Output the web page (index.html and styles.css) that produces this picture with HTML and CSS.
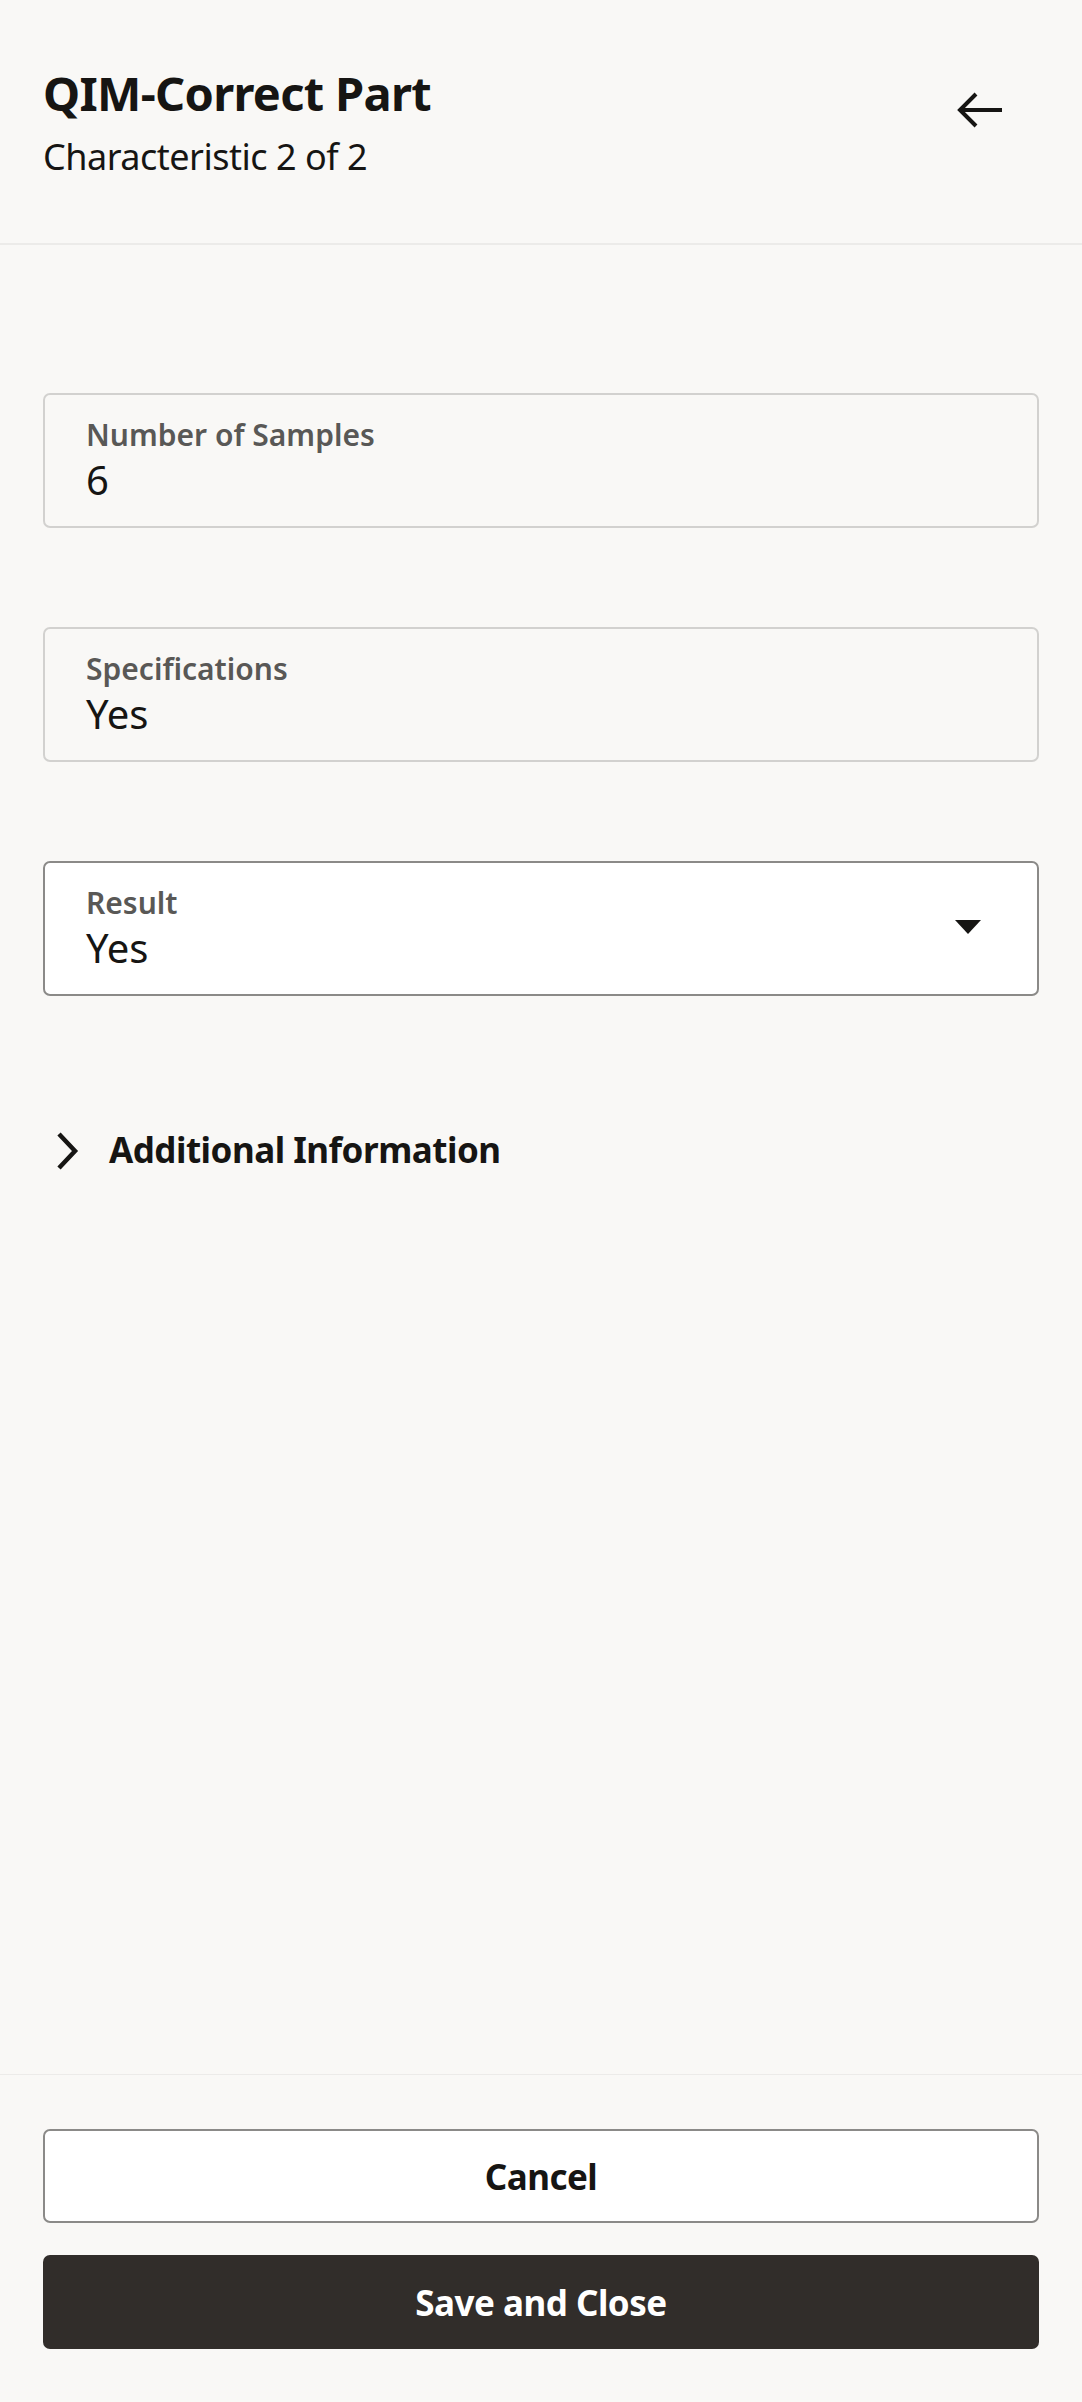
FILE: index.html
```html
<!DOCTYPE html>
<html lang="en">
<head>
<meta charset="utf-8">
<title>QIM-Correct Part</title>
<link rel="stylesheet" href="styles.css">
</head>
<body>
<div class="page">
  <header class="header">
    <div class="titles">
      <h1 class="title">QIM-Correct Part</h1>
      <div class="subtitle">Characteristic 2 of 2</div>
    </div>
    <button class="back" aria-label="Back">
      <svg width="48" height="48" viewBox="0 0 48 48" fill="none">
        <path d="M45 24H3M19 8L3 24L19 40" stroke="#161513" stroke-width="4" stroke-linecap="butt" stroke-linejoin="miter"/>
      </svg>
    </button>
  </header>

  <main class="main">
    <div class="field readonly">
      <div class="label">Number of Samples</div>
      <div class="value">6</div>
    </div>
    <div class="field readonly">
      <div class="label">Specifications</div>
      <div class="value">Yes</div>
    </div>
    <div class="field select">
      <div class="field-text">
        <div class="label">Result</div>
        <div class="value">Yes</div>
      </div>
      <svg class="caret" width="26" height="14" viewBox="0 0 26 14"><path d="M0 0H26L13 14Z" fill="#161513"/></svg>
    </div>

    <div class="disclosure">
      <svg class="chevron" width="24" height="38" viewBox="0 0 24 38" fill="none">
        <path d="M4 2L20 19L4 36" stroke="#161513" stroke-width="4.5"/>
      </svg>
      <span class="disclosure-text">Additional Information</span>
    </div>
  </main>

  <footer class="footer">
    <button class="btn btn-outline">Cancel</button>
    <button class="btn btn-solid">Save and Close</button>
  </footer>
</div>
</body>
</html>
```

FILE: styles.css
```css
* { box-sizing: border-box; }

html, body {
  margin: 0;
  padding: 0;
  background: #f9f8f6;
}

body {
  font-family: "Noto Sans", "Open Sans", sans-serif;
  color: #161513;
}

.page {
  min-height: 2402px;
  display: flex;
  flex-direction: column;
}

.header {
  display: flex;
  justify-content: space-between;
  align-items: flex-start;
  padding: 65px 77px 64px 43px;
  border-bottom: 2px solid #ecebe9;
}

.title {
  margin: 0;
  font-size: 47px;
  line-height: 56px;
  font-weight: 700;
  letter-spacing: -0.7px;
}

.subtitle {
  margin-top: 14px;
  font-size: 36px;
  line-height: 44px;
  font-weight: 400;
  letter-spacing: -0.5px;
}

.back {
  margin-top: 21px;
  width: 48px;
  height: 48px;
  padding: 0;
  border: 0;
  background: none;
  display: flex;
}

.main {
  flex: 1;
  display: flex;
  flex-direction: column;
  padding: 148px 43px 0;
}

.field {
  border: 2px solid #d2d1cf;
  border-radius: 7px;
  padding: 22px 27px 19px 41px;
  margin-bottom: 99px;
}

.field.select {
  background: #ffffff;
  border-color: #8b8a88;
  display: flex;
  align-items: center;
  justify-content: space-between;
  padding-right: 56px;
}

.label {
  font-size: 30px;
  line-height: 36px;
  font-weight: 600;
  color: #595856;
}

.value {
  font-size: 40px;
  line-height: 54px;
  font-weight: 400;
  color: #161513;
}

.caret {
  display: block;
  margin-top: -6px;
}

.disclosure {
  display: flex;
  align-items: center;
  gap: 30px;
  margin-top: 33px;
  padding-left: 12px;
}

.chevron { display: block; margin-top: 2px; }

.disclosure-text {
  font-size: 35px;
  line-height: 44px;
  font-weight: 700;
  letter-spacing: -0.5px;
}

.footer {
  border-top: 1px solid #ecebe9;
  padding: 54px 43px 53px;
  display: flex;
  flex-direction: column;
  gap: 32px;
}

.btn {
  height: 94px;
  border-radius: 7px;
  font-family: "Noto Sans", "Open Sans", sans-serif;
  font-size: 35px;
  font-weight: 700;
  letter-spacing: -0.5px;
  display: flex;
  align-items: center;
  justify-content: center;
  padding: 0;
}

.btn-outline {
  background: #ffffff;
  border: 2px solid #8b8a88;
  color: #161513;
}

.btn-solid {
  background: #312d2a;
  border: 0;
  color: #ffffff;
}
```
